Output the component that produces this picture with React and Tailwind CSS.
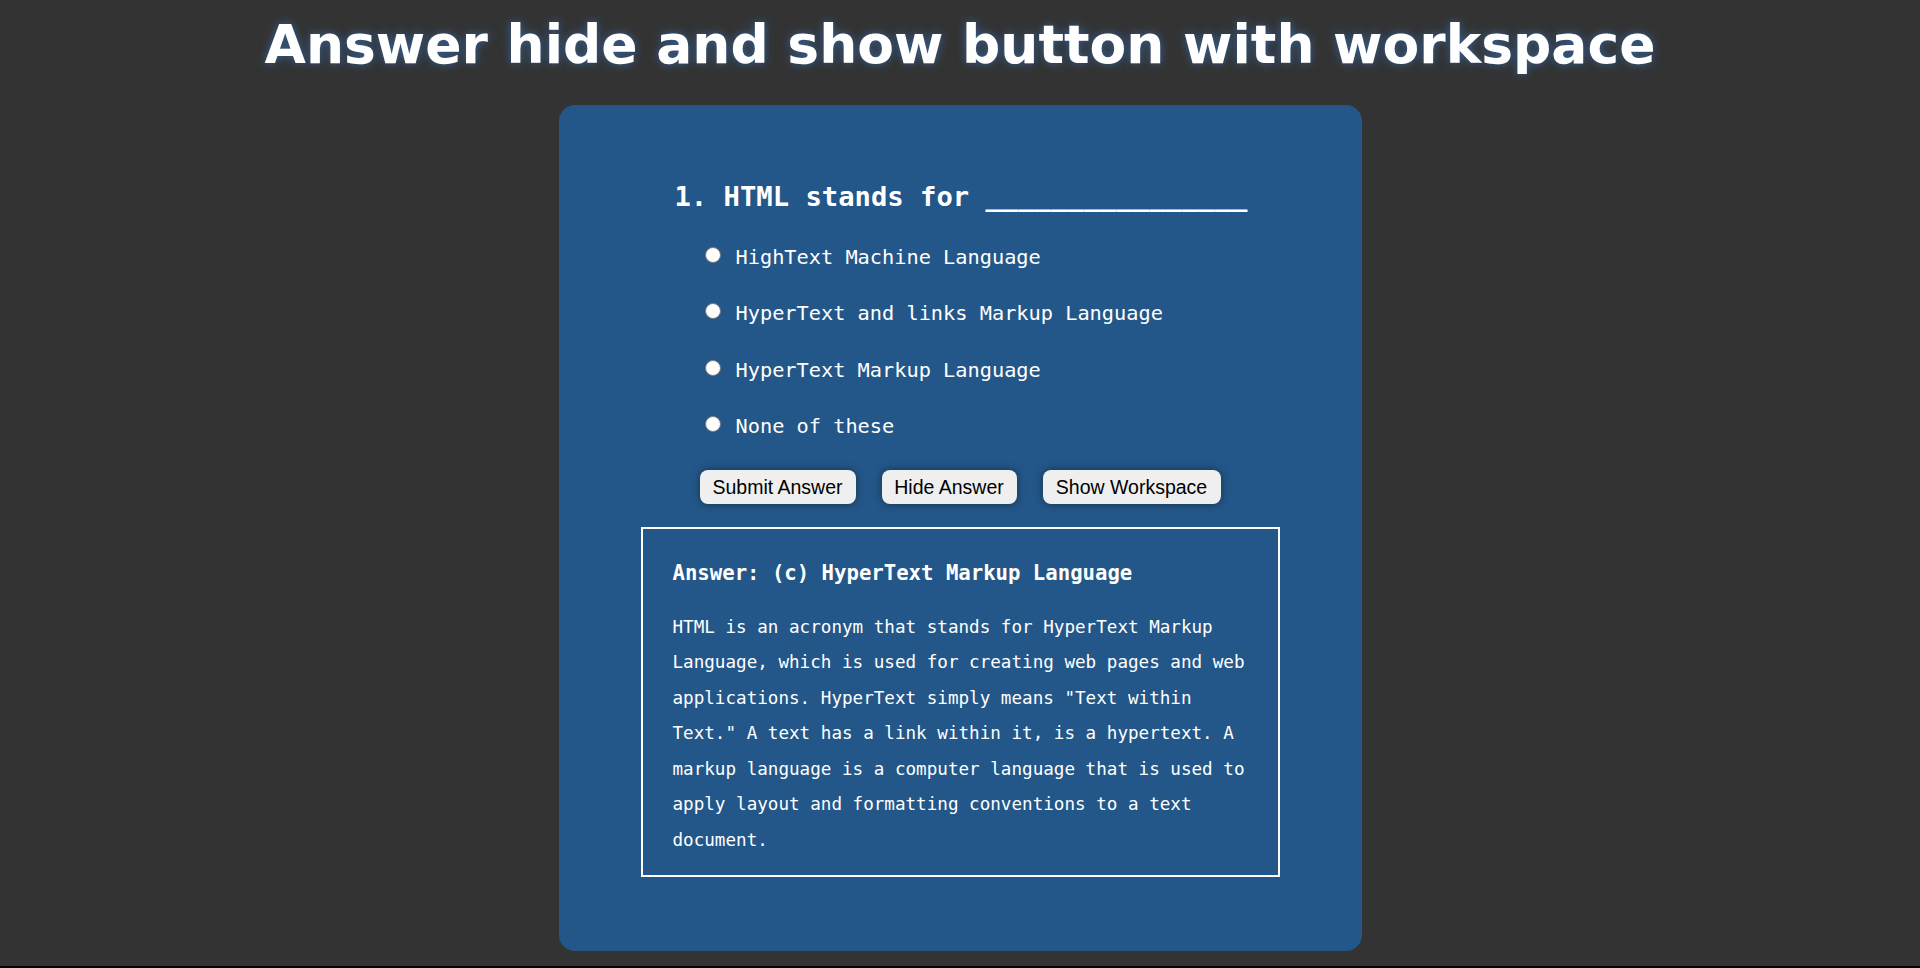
import { useState } from "react";

// quiz options for question 1
const options = [
  "HighText Machine Language",
  "HyperText and links Markup Language",
  "HyperText Markup Language",
  "None of these",
];

const mono = "font-['DejaVu_Sans_Mono',monospace]";

function QuizButton({ label, width, onClick }) {
  return (
    <button
      type="button"
      onClick={onClick}
      className={`${width} h-[34px] flex items-center justify-center rounded-lg bg-[#efefef] text-black text-[19.5px] font-['Liberation_Sans',Arial,sans-serif] shadow-[0_0_9px_rgba(0,0,0,0.45)]`}
    >
      {label}
    </button>
  );
}

export default function App() {
  const [picked, setPicked] = useState(null);
  const [showAnswer, setShowAnswer] = useState(true);

  return (
    <div className="min-h-screen bg-black">
      <div className="h-[966px] bg-[#333333] flex flex-col items-center">
        {/* heading */}
        <h1 className="pt-[13px] leading-[64px] text-[53.5px] font-bold text-white font-['DejaVu_Sans',Verdana,sans-serif] [text-shadow:0_0_10px_rgba(55,110,175,0.8)]">
          Answer hide and show button with workspace
        </h1>

        {/* question card */}
        <div className="mt-[28px] w-[803px] h-[846px] rounded-2xl bg-[#235789] pt-[76px]">
          <div className="w-[639px] mx-auto flex flex-col">
            <h2 className={`${mono} pl-[34px] text-[27.2px] leading-[32px] font-bold text-white`}>
              1. HTML stands for ________________
            </h2>

            <div className="mt-[28px] flex flex-col gap-[24.4px] pl-[64px]">
              {options.map((opt, i) => (
                <label key={opt} className="flex items-start gap-[15px] h-[32px]">
                  <input
                    type="radio"
                    name="q1"
                    checked={picked === i}
                    onChange={() => setPicked(i)}
                    className="appearance-none mt-[6px] w-[16px] h-[16px] shrink-0 rounded-full bg-white border border-[#7a7a7a] checked:border-[5px] checked:border-[#0075ff]"
                  />
                  <span className={`${mono} text-[20.3px] leading-[32px] text-white whitespace-nowrap`}>
                    {opt}
                  </span>
                </label>
              ))}
            </div>

            <div className="mt-[28px] pl-[59px] flex gap-[26px]">
              <QuizButton label="Submit Answer" width="w-[156px]" />
              <QuizButton
                label={showAnswer ? "Hide Answer" : "Show Answer"}
                width="w-[135px]"
                onClick={() => setShowAnswer(!showAnswer)}
              />
              <QuizButton label="Show Workspace" width="w-[178px]" />
            </div>

            {showAnswer && (
              <div className="mt-[23px] h-[350px] border-2 border-white pt-[30px] pl-[30px] pr-[30px]">
                <h3 className={`${mono} text-[20.65px] leading-[28px] font-bold text-white`}>
                  Answer: (c) HyperText Markup Language
                </h3>
                <p className={`${mono} mt-[22.6px] text-[17.6px] leading-[35.5px] text-white`}>
                  HTML is an acronym that stands for HyperText Markup Language, which is used for
                  creating web pages and web applications. HyperText simply means "Text within
                  Text." A text has a link within it, is a hypertext. A markup language is a
                  computer language that is used to apply layout and formatting conventions to a
                  text document.
                </p>
              </div>
            )}
          </div>
        </div>
      </div>
    </div>
  );
}
